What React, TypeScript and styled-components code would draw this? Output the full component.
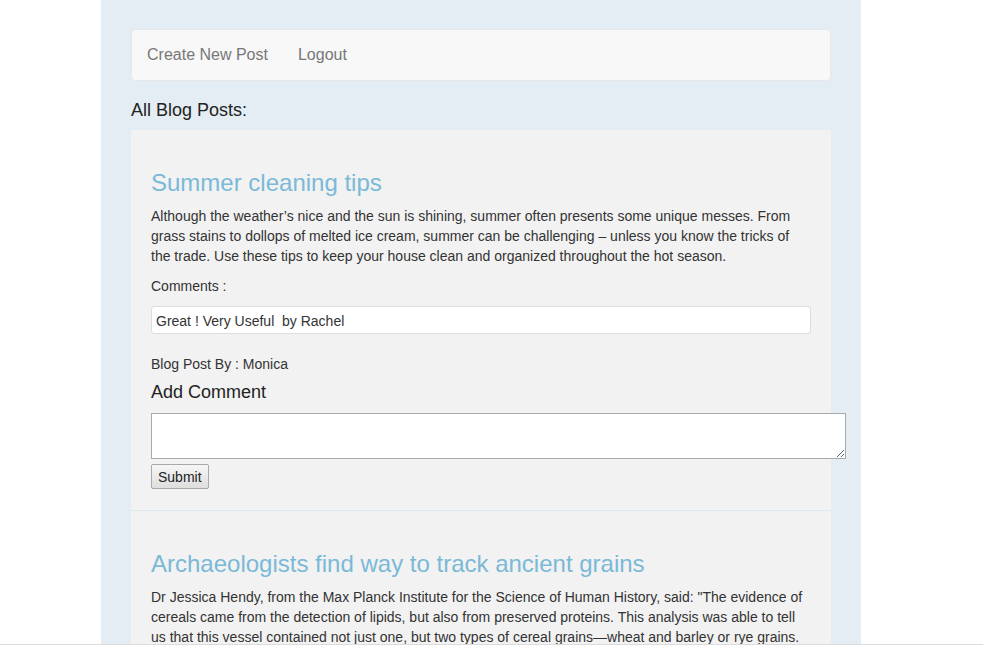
import { styled, createGlobalStyle } from 'styled-components';

const GlobalStyle = createGlobalStyle`
  html, body {
    margin: 0;
    padding: 0;
    background: #ffffff;
  }
  body {
    font-family: 'Liberation Sans', Arial, Helvetica, sans-serif;
    font-size: 14px;
    line-height: 20px;
    color: #333333;
  }
  * {
    box-sizing: border-box;
  }
`;

type Post = {
  id: number;
  title: string;
  body: string;
  author?: string;
  comments?: { text: string; by: string }[];
};

const posts: Post[] = [
  {
    id: 1,
    title: 'Summer cleaning tips',
    body:
      'Although the weather’s nice and the sun is shining, summer often presents some unique messes. From grass stains to dollops of melted ice cream, summer can be challenging – unless you know the tricks of the trade. Use these tips to keep your house clean and organized throughout the hot season.',
    author: 'Monica',
    comments: [{ text: 'Great ! Very Useful ', by: 'Rachel' }],
  },
  {
    id: 2,
    title: 'Archaeologists find way to track ancient grains',
    body:
      'Dr Jessica Hendy, from the Max Planck Institute for the Science of Human History, said: "The evidence of cereals came from the detection of lipids, but also from preserved proteins. This analysis was able to tell us that this vessel contained not just one, but two types of cereal grains—wheat and barley or rye grains.',
  },
];

const App = () => {
  return (
    <>
      <GlobalStyle />
      <Page>
        <Navbar>
          <NavLink href="#">Create New Post</NavLink>
          <NavLink href="#">Logout</NavLink>
        </Navbar>
        <Heading>All Blog Posts:</Heading>
        <PostList>
          {posts.map((post) => (
            <PostItem key={post.id}>
              <PostTitle>{post.title}</PostTitle>
              <PostBody>{post.body}</PostBody>
              {post.comments && (
                <>
                  <Label>Comments :</Label>
                  {post.comments.map((c) => (
                    <CommentBox key={c.by}>
                      {`${c.text} by ${c.by}`}
                    </CommentBox>
                  ))}
                  <Author>Blog Post By : {post.author}</Author>
                  <AddTitle>Add Comment</AddTitle>
                  <CommentForm onSubmit={(e) => e.preventDefault()}>
                    <TextArea />
                    <SubmitButton type="submit">Submit</SubmitButton>
                  </CommentForm>
                </>
              )}
            </PostItem>
          ))}
        </PostList>
      </Page>
      <BottomEdge />
    </>
  );
};

const Page = styled.div`
  width: 760px;
  height: 100vh;
  overflow: hidden;
  margin-left: 101px;
  padding: 29px 30px 0;
  background: #e4edf3;
`;

const Navbar = styled.nav`
  display: flex;
  height: 52px;
  background: #f8f8f8;
  border: 1px solid #e7e7e7;
  border-radius: 4px;
`;

const NavLink = styled.a`
  display: block;
  padding: 15px 15px 15px;
  font-size: 16px;
  line-height: 20px;
  color: #777777;
  text-decoration: none;
`;

const Heading = styled.div`
  margin: 19px 0 10px;
  font-size: 18px;
  line-height: 20px;
  color: #222222;
`;

const PostList = styled.div`
  background: #f2f2f2;
`;

const PostItem = styled.div`
  padding: 20px 20px 21px;
  border-bottom: 1px solid #dde8ef;
`;

const PostTitle = styled.h3`
  margin: 20px 0 10px;
  font-size: 24px;
  font-weight: 400;
  line-height: 26px;
  color: #7ab9d7;
`;

const PostBody = styled.p`
  margin: 0 0 10px;
`;

const Label = styled.div`
  margin-bottom: 10px;
`;

const CommentBox = styled.div`
  height: 28px;
  padding: 4px 4px;
  white-space: pre;
  background: #ffffff;
  border: 1px solid #dddddd;
  border-radius: 3px;
`;

const Author = styled.div`
  margin-top: 20px;
`;

const AddTitle = styled.div`
  margin-top: 8px;
  font-size: 18px;
  line-height: 20px;
  color: #222222;
`;

const CommentForm = styled.form`
  display: flex;
  flex-direction: column;
  align-items: flex-start;
  gap: 5px;
  margin-top: 11px;
`;

const TextArea = styled.textarea`
  display: block;
  width: 695px;
  height: 46px;
  margin: 0;
  border: 1px solid #a9a9a9;
  background: #ffffff;
  font-family: 'Liberation Mono', monospace;
`;

const SubmitButton = styled.button`
  height: 25px;
  padding: 0 6px;
  font-family: 'Liberation Sans', Arial, sans-serif;
  font-size: 14px;
  color: #222222;
  background: linear-gradient(#f6f6f6, #dedede);
  border: 1px solid #a9a9a9;
  border-radius: 2px;
`;

const BottomEdge = styled.div`
  position: fixed;
  left: 0;
  right: 0;
  bottom: 0;
  height: 2px;
  background: #ffffff;
  border-top: 1px solid #dcdcdc;
`;

export default App;
